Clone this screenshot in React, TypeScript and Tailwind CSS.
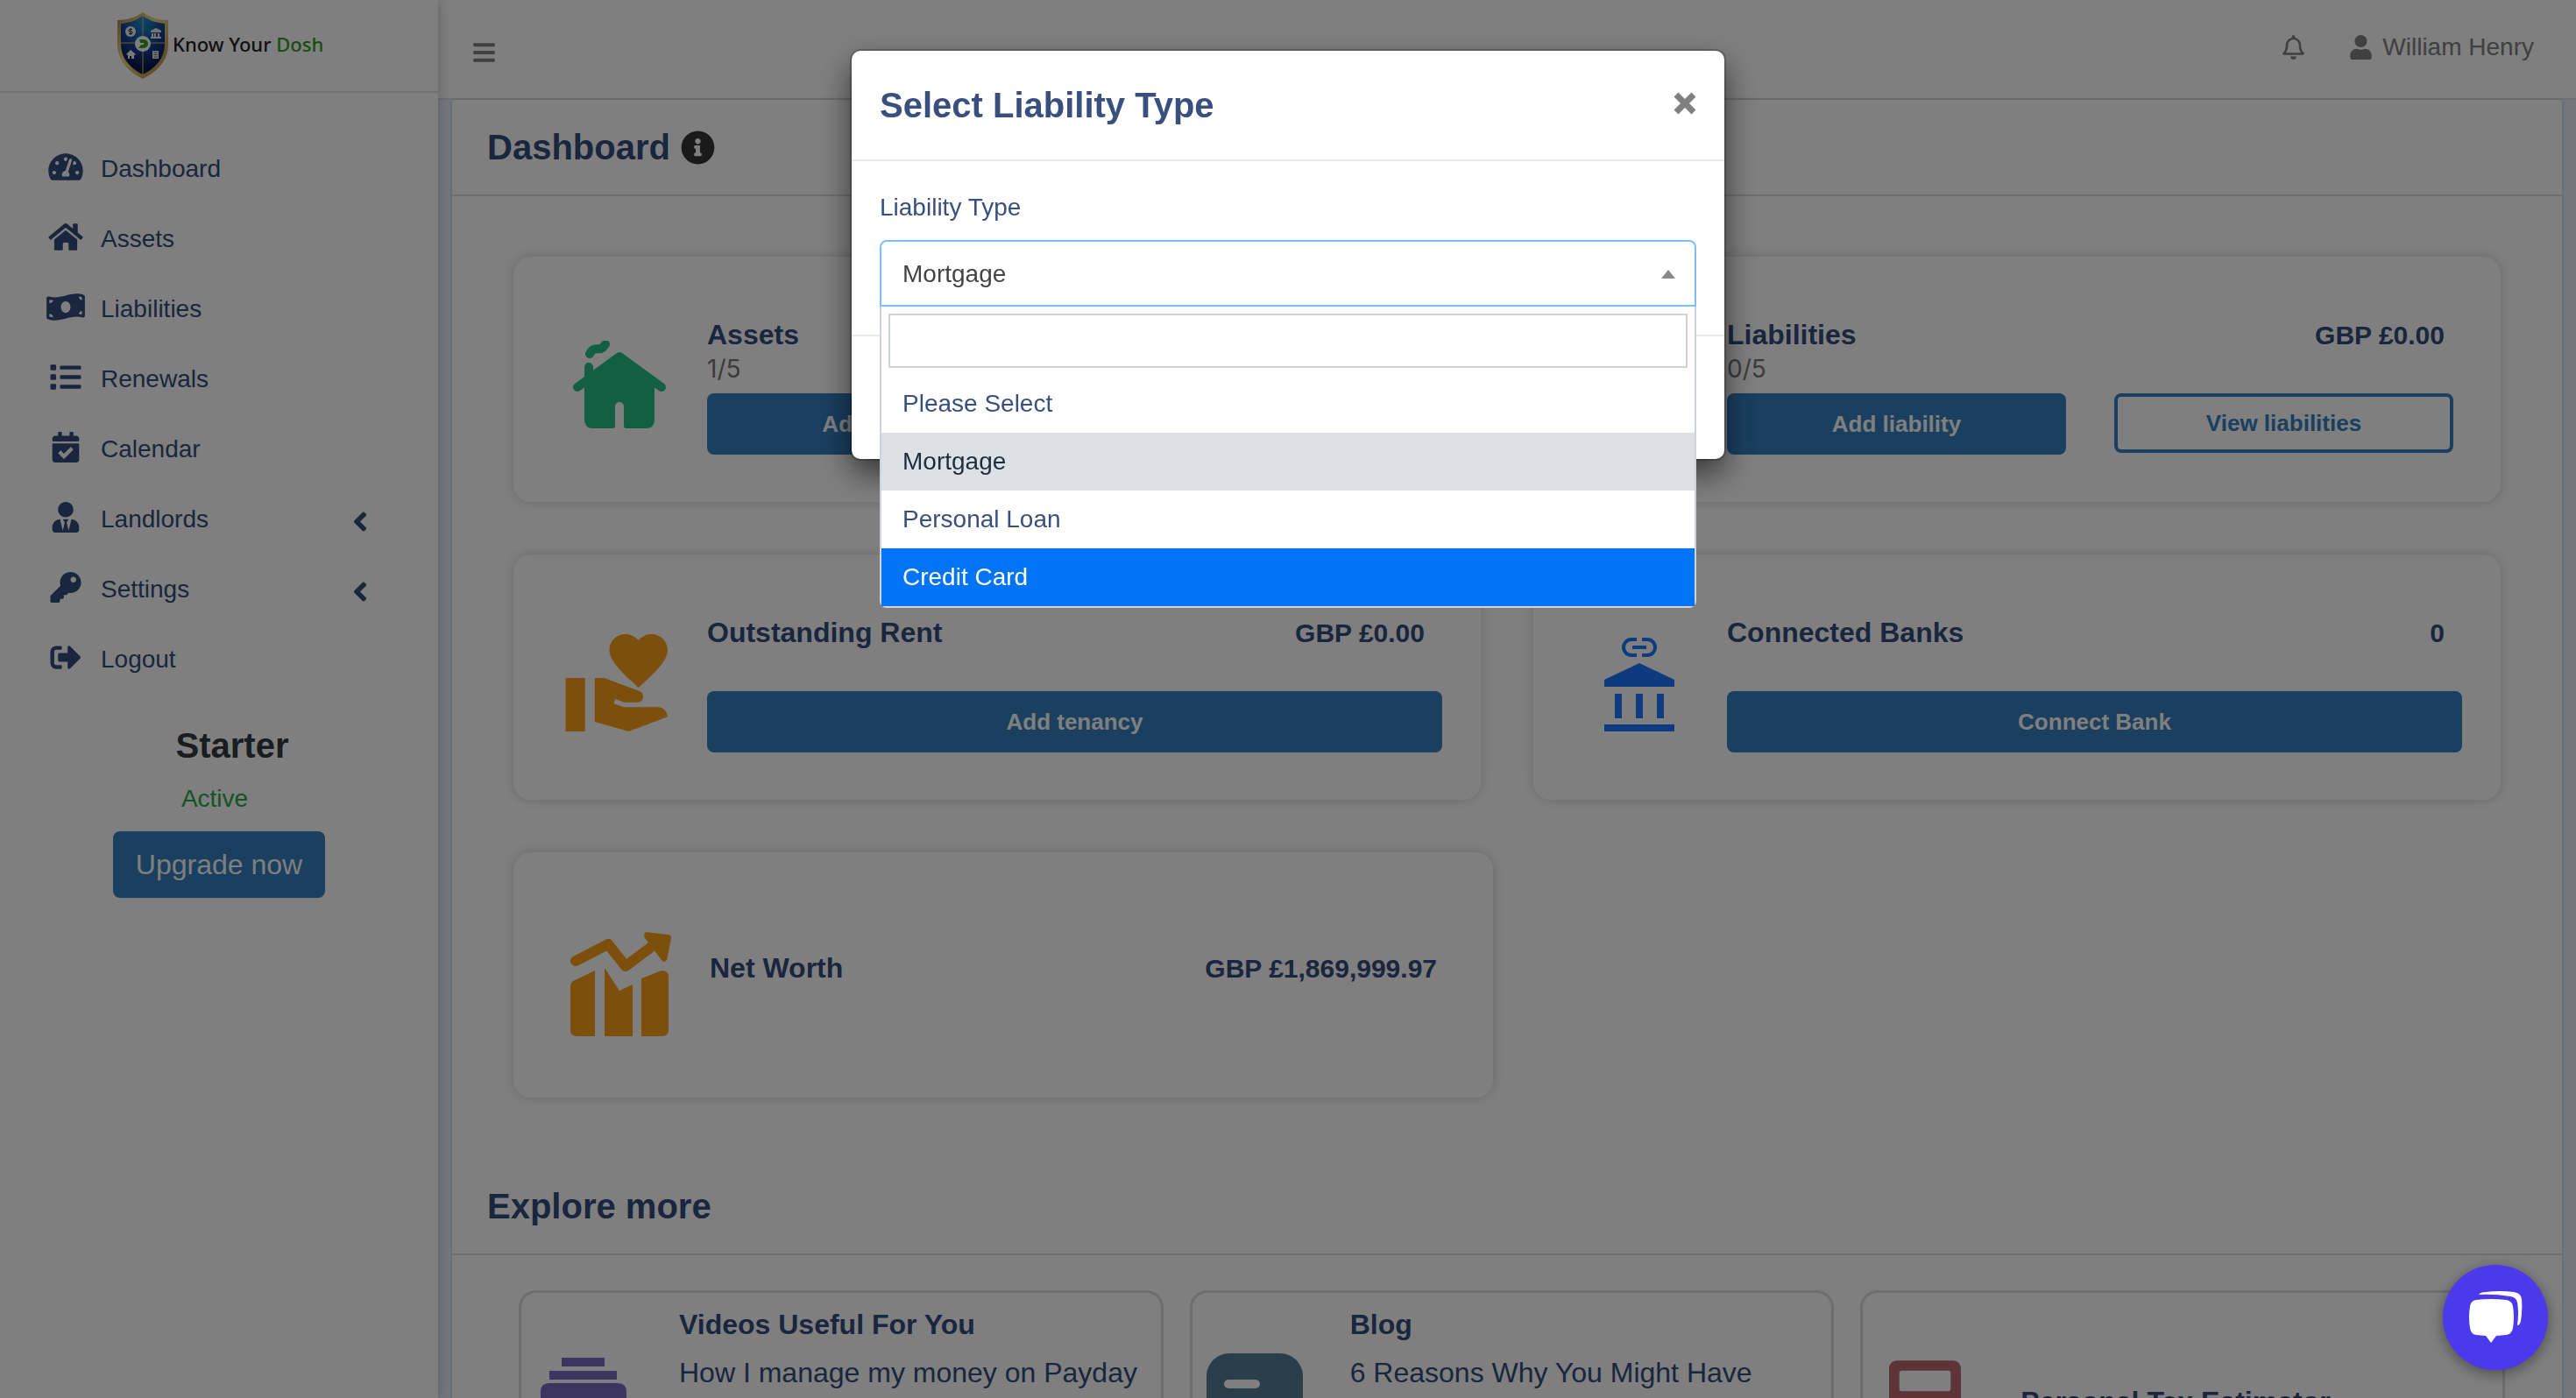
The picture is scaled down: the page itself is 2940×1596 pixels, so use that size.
import type { ReactNode } from 'react';
import {
  FaAngleLeft,
  FaBars,
  FaCalculator,
  FaCalendarCheck,
  FaHome,
  FaInfoCircle,
  FaKey,
  FaList,
  FaMoneyBillWave,
  FaRegBell,
  FaSignOutAlt,
  FaTachometerAlt,
  FaUser,
  FaUserTie,
} from 'react-icons/fa';
import { MdVolunteerActivism } from 'react-icons/md';

const menu = [
  { label: 'Dashboard', icon: FaTachometerAlt },
  { label: 'Assets', icon: FaHome },
  { label: 'Liabilities', icon: FaMoneyBillWave },
  { label: 'Renewals', icon: FaList },
  { label: 'Calendar', icon: FaCalendarCheck },
  { label: 'Landlords', icon: FaUserTie, sub: true },
  { label: 'Settings', icon: FaKey, sub: true },
  { label: 'Logout', icon: FaSignOutAlt },
];

const options = [
  { label: 'Please Select', style: 'text-[#39507f]' },
  { label: 'Mortgage', style: 'bg-[#dde1e6] text-[#1f2d3d]' },
  { label: 'Personal Loan', style: 'text-[#39507f]' },
  { label: 'Credit Card', style: 'bg-[#0074f4] text-white' },
];

function Shield() {
  return (
    <svg viewBox="0 0 60 76" className="h-[76px] w-[60px]">
      <defs>
        <linearGradient id="gold" x1="0" y1="0" x2="1" y2="1">
          <stop offset="0" stopColor="#a3803f" />
          <stop offset="0.4" stopColor="#f3d58c" />
          <stop offset="1" stopColor="#a8803a" />
        </linearGradient>
        <radialGradient id="navy" cx="0.5" cy="0.1" r="0.8">
          <stop offset="0" stopColor="#1c8fd0" />
          <stop offset="0.6" stopColor="#123f8f" />
          <stop offset="1" stopColor="#0b1446" />
        </radialGradient>
      </defs>
      <path d="M30 0C22 6 12 9 1 9V36C1 56 14 68 30 76C46 68 59 56 59 36V9C48 9 38 6 30 0Z" fill="url(#gold)" />
      <path d="M30 4C22 10 14 12 5 13V36C5 53 16 64 30 71C44 64 55 53 55 36V13C46 12 38 10 30 4Z" fill="url(#navy)" />
      <path d="M30 4V71M5 35H55" stroke="#d8b566" strokeWidth="1" />
      <circle cx="30" cy="36" r="9" fill="#fff" />
      <path d="M26 31h5a5 5 0 0 1 0 10h-6l3-4h3v-2h-4z" fill="#3c9a28" />
      <circle cx="16" cy="22" r="6" fill="#f4f4f4" />
      <path d="M18 19.500h-3a1.200 1.200 0 0 0 0 2.500h2a1.200 1.200 0 0 1 0 2.500h-3M16 18v8" stroke="#234" strokeWidth="1" fill="none" />
      <path d="M39 21l6-3 6 3v2H39zM40 24h2v4h-2zm3 0h2v4h-2zm4 0h2v4h-2zM39 28h12v2H39z" fill="#e8e8e8" />
      <path d="M11 48l5-5 6 5-1 1-5-4-4 4zM13 48l3-3 4 3v5h-3v-3h-2v3h-2z" fill="#f4f4f4" />
      <path d="M41 44h7v9h-7z" fill="#e8e8e8" />
      <path d="M42.500 46h4M42.500 48.500h4M42.500 51h4" stroke="#345" strokeWidth="0.800" />
    </svg>
  );
}

function HouseIcon() {
  return (
    <svg viewBox="0 0 106 100" className="w-[106px]" fill="none" stroke="#24be88" strokeWidth="10" strokeLinecap="round" strokeLinejoin="round">
      <path d="M19 15c4-8 8-5 13-6 3-1 3-3 5-5" />
      <path d="M18 30v24M5 53l48-35 48 35" />
      <path d="M53 14L13 48V90q0 10 10 10H45a3 3 0 0 0 3-3V75a5 5 0 0 1 10 0V97a3 3 0 0 0 3 3H83q10 0 10-10V48z" fill="#24be88" stroke="none" />
    </svg>
  );
}

function BankIcon() {
  return (
    <svg viewBox="0 0 80 108" className="mt-1.5 w-[80px]" fill="#1d76ff">
      <path d="M37 2H31a9 9 0 0 0 0 18h6M43 2h6a9 9 0 0 1 0 18h-6" fill="none" stroke="#1d76ff" strokeWidth="4" />
      <path d="M32 9h16v4H32z" />
      <path d="M40 29L80 48v8H0v-8zM12 64h8v28h-8zM36 64h8v28h-8zM60 64h8v28h-8zM0 99h80v8H0z" />
    </svg>
  );
}

function ChartIcon() {
  return (
    <svg viewBox="0 0 116 120" className="w-[116px]" fill="#f89f1b">
      <path d="M7 34L44 15 64 40 100 13" fill="none" stroke="#f89f1b" strokeWidth="12" strokeLinecap="round" strokeLinejoin="round" />
      <path d="M87 1L113 4q3 0 3 4L111 33q-3 4-6 0L86 8q-2-5 1-7z" />
      <path d="M1 62q0-3 3-5L29 45V120H8q-7 0-7-7zM40 42l17 26 15-7V120H40zM82 54L105 45q8 0 8 6V113q0 7-7 7H82z" />
    </svg>
  );
}

function VideosIcon() {
  return (
    <svg viewBox="0 0 98 100" className="w-[98px]" fill="#766abe">
      <path d="M24 0h49v10H24zM10 15h77v10H10zM10 29h78q10 0 10 10v51q0 10-10 10H10Q0 100 0 90V39q0-10 10-10z" />
      <path d="M38 48l28 17-28 17z" fill="#fff" />
    </svg>
  );
}

function BlogIcon() {
  return (
    <svg viewBox="0 0 110 110" className="w-[110px]">
      <rect width="110" height="110" rx="26" fill="#547a94" />
      <rect x="20" y="30" width="41" height="10" rx="5" fill="#fff" />
      <rect x="20" y="66" width="68" height="10" rx="5" fill="#fff" />
    </svg>
  );
}

const solidBtn = 'h-[70px] rounded-lg bg-[#347ebe] text-[26px] font-bold text-white';
const outlineBtn = 'h-[68px] rounded-lg border-4 border-[#347ebe] text-[26px] font-bold text-[#347ebe]';

type StatProps = { title: string; amount: string; count?: string; icon: ReactNode; children: ReactNode };

function StatCard({ title, amount, count, icon, children }: StatProps) {
  return (
    <section className="flex h-[280px] rounded-[20px] bg-white pr-11 shadow-[0_0_14px_rgba(0,0,0,0.18)]">
      <div className="flex w-[221px] shrink-0 items-center justify-center pl-5 pt-3">{icon}</div>
      <div className="grow pt-[69px]">
        <div className="flex h-10 items-center justify-between pr-5 font-bold">
          <h2 className="text-[32px]">{title}</h2>
          <span className="text-[30px]">{amount}</span>
        </div>
        <p className="mb-[7px] h-10 font-[Inter,sans-serif] text-[28px] leading-[38px] text-[#777]">{count}</p>
        {children}
      </div>
    </section>
  );
}

function ExploreCard({ title, text, icon }: { title: string; text?: string; icon: ReactNode }) {
  return (
    <article className="flex h-[254px] items-center rounded-[20px] border-[3px] border-[#dcdcdc]">
      <div className="mr-[38px] flex w-[142px] shrink-0 items-center justify-center">{icon}</div>
      <div className={text ? 'self-start pt-3' : ''}>
        <h3 className="text-[32px] font-bold leading-[48px]">{title}</h3>
        {text && <p className="mt-[7px] text-[32px] leading-[48px]">{text}</p>}
      </div>
    </article>
  );
}

function Sidebar() {
  return (
    <aside className="z-10 w-[500px] shrink-0 bg-white shadow-[0_0_14px_rgba(0,0,0,0.25)]">
      <a href="#" className="flex h-[106px] items-center border-b-2 border-[#dee2e6] pl-[133px]">
        <Shield />
        <span className="ml-1 pb-1 font-['Noto_Sans'] text-[22px] font-medium text-[#222]">
          Know Your <span className="text-[#2f9a1c]">Dosh</span>
        </span>
      </a>
      <nav className="pt-[47px]">
        {menu.map(({ label, icon: Icon, sub }) => (
          <a key={label} href="#" className="flex h-20 items-center pl-[50px] pr-20 text-[28px]">
            <span className="mr-[15px] flex w-[50px] justify-center pb-1.5">
              <Icon className="h-[35px] w-11" />
            </span>
            <span className="grow">{label}</span>
            {sub && <FaAngleLeft className="mt-1 h-[35px] w-[18px]" />}
          </a>
        ))}
      </nav>
      <div className="flex flex-col items-center pt-[30px]">
        <h4 className="pl-[30px] text-[40px] font-bold leading-[56px] text-[#343a40]">Starter</h4>
        <p className="pr-[10px] pt-3 text-[28px] leading-[42px] text-[#28a745]">Active</p>
        <button className="mt-4 h-[76px] w-[242px] rounded-lg bg-[#347ebe] text-[32px] text-white">Upgrade now</button>
      </div>
    </aside>
  );
}

function LiabilityModal() {
  return (
    <div role="dialog" aria-label="Select Liability Type" className="fixed inset-0 z-20 flex items-start justify-center bg-black/50 pt-[58px]">
      <div className="w-[996px] rounded-[10px] bg-white text-[#39507f] shadow-[0_16px_36px_rgba(0,0,0,0.6),0_0_0_2px_rgba(0,0,0,0.2)]">
        <div className="flex h-[126px] items-center justify-between border-b-2 border-[#e9ecef] px-8">
          <h2 className="text-[40px] font-bold">Select Liability Type</h2>
          <button aria-label="Close" className="pb-1">
            <svg viewBox="0 0 26 26" className="w-[26px]" stroke="#808080" strokeWidth="7">
              <path d="M3 3l20 20M23 3L3 23" />
            </svg>
          </button>
        </div>
        <div className="h-[200px] border-b-2 border-[#e9ecef] px-8 pt-8">
          <label htmlFor="type-search" className="block h-[58px] text-[28px] leading-[42px]">Liability Type</label>
          <div className="relative">
            <button className="flex h-[76px] w-full items-center justify-between rounded-t-lg border-2 border-[#80bdff] pl-6 pr-[22px] pt-0.5 text-[28px] text-[#444]">
              Mortgage
              <svg viewBox="0 0 16 10" className="w-4 fill-[#888]">
                <path d="M8 0l8 10H0z" />
              </svg>
            </button>
            <div className="absolute inset-x-0 top-full rounded-b-lg border-2 border-t-0 border-[#ced4da] bg-white">
              <div className="p-2">
                <input id="type-search" className="block h-[62px] w-full border-2 border-[#ced4da] px-2 text-[28px] outline-none" />
              </div>
              <ul role="listbox">
                {options.map((o) => (
                  <li key={o.label} role="option" aria-selected={o.label === 'Mortgage'} className={`h-[66px] pl-6 text-[28px] leading-[66px] ${o.style}`}>
                    {o.label}
                  </li>
                ))}
              </ul>
            </div>
          </div>
        </div>
        <div className="h-[140px]" />
      </div>
    </div>
  );
}

export default function App() {
  return (
    <div className="flex h-screen overflow-hidden bg-[#e9f0fa] font-['Liberation_Sans',Arial,sans-serif] text-[#344c7c]">
      <Sidebar />
      <div className="flex grow flex-col">
        <header className="flex h-[114px] shrink-0 items-center justify-between border-b-2 border-[#dee2e6] bg-white pl-10 pr-12 text-[28px] text-[#808080]">
          <button aria-label="Toggle menu" className="pt-2">
            <FaBars className="h-7 w-[25px]" />
          </button>
          <div className="flex items-center pb-1">
            <button aria-label="Notifications" className="mr-[52px]">
              <FaRegBell className="h-7 w-[25px]" />
            </button>
            <FaUser className="mr-3 h-7 w-[25px]" />
            <span>William Henry</span>
          </div>
        </header>

        <main className="mx-4 grow bg-white shadow-[0_0_4px_rgba(0,0,0,0.2)]">
          <div className="flex h-[110px] items-center gap-3 border-b-2 border-[#dcdcdc] pl-10">
            <h1 className="text-[40px] font-bold">Dashboard</h1>
            <FaInfoCircle className="size-[39px] text-[#343434]" />
          </div>

          <div className="grid grid-cols-2 gap-[60px] px-[70px] pb-[70px] pt-[69px]">
            <StatCard title="Assets" amount="GBP £1,869,999.97" count="1/5" icon={<HouseIcon />}>
              <div className="grid grid-cols-2 gap-[55px] pr-[10px]">
                <button className={solidBtn}>Add asset</button>
                <button className={outlineBtn}>View assets</button>
              </div>
            </StatCard>
            <StatCard title="Liabilities" amount="GBP £0.00" count="0/5" icon={<FaMoneyBillWave className="h-20 w-[100px]" />}>
              <div className="grid grid-cols-2 gap-[55px] pr-[10px]">
                <button className={solidBtn}>Add liability</button>
                <button className={outlineBtn}>View liabilities</button>
              </div>
            </StatCard>
            <StatCard title="Outstanding Rent" amount="GBP £0.00" icon={<MdVolunteerActivism className="size-[133px] text-[#f89f1b]" />}>
              <button className={`w-full ${solidBtn}`}>Add tenancy</button>
            </StatCard>
            <StatCard title="Connected Banks" amount="0" icon={<BankIcon />}>
              <button className={`w-full ${solidBtn}`}>Connect Bank</button>
            </StatCard>
            <section className="-mr-[14px] flex h-[280px] items-center rounded-[20px] bg-white pr-16 shadow-[0_0_14px_rgba(0,0,0,0.18)]">
              <div className="flex w-[224px] shrink-0 justify-center pl-5 pt-5">
                <ChartIcon />
              </div>
              <div className="flex grow items-center justify-between pb-4 font-bold">
                <h2 className="text-[32px]">Net Worth</h2>
                <span className="text-[30px]">GBP £1,869,999.97</span>
              </div>
            </section>
          </div>

          <h2 className="h-[110px] border-b-2 border-[#dcdcdc] pl-10 text-[40px] font-bold leading-[108px]">Explore more</h2>
          <div className="grid grid-cols-3 gap-[30px] pb-10 pl-[76px] pr-[65px] pt-10">
            <ExploreCard title="Videos Useful For You" text="How I manage my money on Payday" icon={<VideosIcon />} />
            <ExploreCard title="Blog" text="6 Reasons Why You Might Have" icon={<BlogIcon />} />
            <ExploreCard title="Personal Tax Estimator" icon={<FaCalculator className="h-[94px] w-[82px] text-[#be6870]" />} />
          </div>
        </main>
      </div>

      <LiabilityModal />

      <button aria-label="Open chat" className="fixed bottom-8 right-8 z-30 flex size-[120px] items-center justify-center rounded-full bg-[#4a3aec] shadow-[0_4px_16px_rgba(0,0,0,0.4)]">
        <svg viewBox="0 0 62 60" className="w-[62px]" fill="#fff">
          <path d="M12 4Q14 1 20 1Q36-1 52 1Q60 2 61 9Q62 22 60 34Q59 39 56 39Q58 24 56 13Q55 7 48 6Q30 3 12 4Z" />
          <path d="M9 10Q26 8 43 10Q50 11 51 17Q53 30 51 42Q50 49 43 50L32 51L26 59L20 51L9 50Q3 49 2 42Q0 30 2 17Q3 11 9 10Z" />
        </svg>
      </button>
    </div>
  );
}
